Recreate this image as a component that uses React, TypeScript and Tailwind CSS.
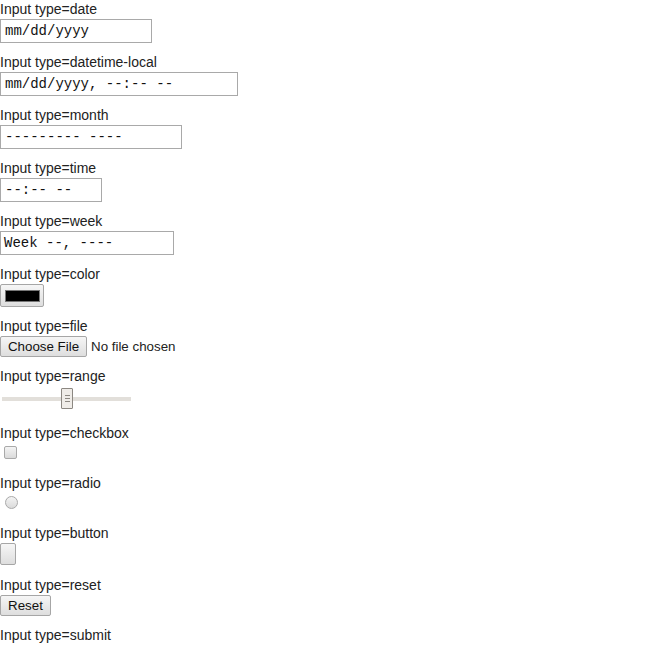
const labelCls = "block h-[19px] text-[14px] leading-[18px] text-[#222] [font-family:'Liberation_Sans',Arial,sans-serif]"
const boxCls = "flex items-center h-[24px] border border-[#a9a9a9] bg-white text-[14px] text-[#111] whitespace-pre [font-family:'Liberation_Mono',monospace]"
const btnCls = "flex items-center justify-center border border-[#a6a6a6] rounded-[2px] bg-gradient-to-b from-[#f6f6f6] to-[#dedede] text-[13.33px] text-[#111] [font-family:'Liberation_Sans',Arial,sans-serif]"

function Field({name, children}: { name: string, children: React.ReactNode }) {
    return (
        <div className="flex flex-col items-start pb-[10px]">
            <span className={labelCls}>Input type={name}</span>
            {children}
        </div>
    )
}

function App() {
    return (
        <div className="w-[645px] h-[645px] overflow-hidden bg-white">
            <Field name="date">
                <div className={`${boxCls} w-[152px] pl-[4px]`}>mm/dd/yyyy</div>
            </Field>
            <Field name="datetime-local">
                <div className={`${boxCls} w-[238px] pl-[4px]`}>mm/dd/yyyy, --:-- --</div>
            </Field>
            <Field name="month">
                <div className={`${boxCls} w-[182px] pl-[4px]`}>--------- ----</div>
            </Field>
            <Field name="time">
                <div className={`${boxCls} w-[102px] pl-[4px]`}>--:-- --</div>
            </Field>
            <Field name="week">
                <div className={`${boxCls} w-[174px] pl-[3px]`}>Week --, ----</div>
            </Field>
            <Field name="color">
                <div className={`${btnCls} w-[44px] h-[23px]`}>
                    <div className="w-[35px] h-[12px] bg-black border border-[#777]"></div>
                </div>
            </Field>
            <Field name="file">
                <div className="flex items-center h-[21px] gap-[4px]">
                    <div className={`${btnCls} w-[87px] h-[21px]`}>Choose File</div>
                    <span className="text-[13.33px] text-[#222] [font-family:'Liberation_Sans',Arial,sans-serif]">No file chosen</span>
                </div>
            </Field>
            <Field name="range">
                <div className="relative w-[133px] h-[28px]">
                    <div className="absolute left-[2px] top-[11px] w-[129px] h-[4px] bg-[#e2dfda]"></div>
                    <div className="absolute left-[61px] top-[2px] w-[12px] h-[21px] border border-[#8c8882] bg-[#efece8] rounded-[1px] flex flex-col items-center justify-center gap-[2px]">
                        <div className="w-[5px] h-px bg-[#8c8882]"></div>
                        <div className="w-[5px] h-px bg-[#8c8882]"></div>
                        <div className="w-[5px] h-px bg-[#8c8882]"></div>
                    </div>
                </div>
            </Field>
            <Field name="checkbox">
                <div className="h-[21px] pt-[3px] pl-[4px]">
                    <div className="w-[13px] h-[13px] border border-[#a9a9a9] rounded-[2px] bg-gradient-to-b from-[#f4f4f4] to-[#dadada]"></div>
                </div>
            </Field>
            <Field name="radio">
                <div className="h-[21px] pt-[3px] pl-[5px]">
                    <div className="w-[13px] h-[13px] border border-[#a9a9a9] rounded-full bg-gradient-to-b from-[#f4f4f4] to-[#dadada]"></div>
                </div>
            </Field>
            <Field name="button">
                <div className="h-[23px]">
                    <div className={`${btnCls} w-[16px] h-[22px]`}></div>
                </div>
            </Field>
            <Field name="reset">
                <div className={`${btnCls} w-[51px] h-[21px]`}>Reset</div>
            </Field>
            <Field name="submit">
                <div className={`${btnCls} w-[58px] h-[21px]`}>Submit</div>
            </Field>
        </div>
    )
}

export default App
